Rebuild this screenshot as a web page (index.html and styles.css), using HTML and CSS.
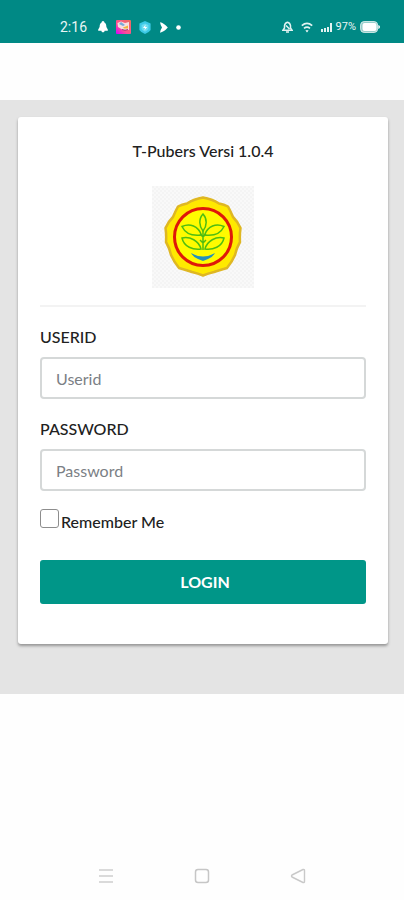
FILE: index.html
```html
<!DOCTYPE html>
<html lang="id">
<head>
    <meta charset="UTF-8">
    <meta name="viewport" content="width=device-width, initial-scale=1.0">
    <title>T-Pubers</title>
    <link rel="stylesheet" href="styles.css">
</head>
<body>
    <header class="status-bar">
        <div class="status-left">
            <span class="clock">2:16</span>
            <svg width="10" height="12" viewBox="0 0 10 12" fill="#fff">
                <path d="M5 0C6 0 6.3 1 6.4 1.6C8 2.5 8.3 4 8.4 6L9.8 8.4V9.8H.2V8.4L1.6 6C1.7 4 2 2.5 3.6 1.6C3.7 1 4 0 5 0ZM3.4 9.8H6.6C6.4 11.8 3.6 11.8 3.4 9.8Z"/>
            </svg>
            <svg width="15" height="14" viewBox="0 0 15 14">
                <defs>
                    <linearGradient id="photo" x1="0" y1="1" x2="1" y2="0">
                        <stop offset="0" stop-color="#d400ff"/>
                        <stop offset=".4" stop-color="#ff4f93"/>
                        <stop offset="1" stop-color="#e8705c"/>
                    </linearGradient>
                </defs>
                <rect width="15" height="14" rx="1" fill="url(#photo)"/>
                <path d="M1.5 3L5 1.5L9 3L13 2V10H7L2 7Z" fill="#f6dfe0"/>
                <path d="M5 2L9 5L7 6L3 4Z" fill="#77a9d8"/>
                <path d="M7 7.5L12 5.5V8.5H8Z" fill="#f2b53c"/>
                <path d="M6 9.5Q9 11 12 9.5" stroke="#a3357a" fill="none"/>
            </svg>
            <svg width="12" height="13" viewBox="0 0 12 13">
                <path d="M6 0L11.6 2.4V9Q10 11.5 6 13Q2 11.5 .4 9V2.4Z" fill="#3bc9e6"/>
                <path d="M6 2.4L9.4 4V8Q8.5 9.8 6 10.8Q3.5 9.8 2.6 8V4Z" fill="#6bdcf0"/>
                <path d="M6.6 3.6L4 7H6L5.4 9.4L8.2 6H6.2Z" fill="#fff"/>
            </svg>
            <svg width="9" height="11" viewBox="0 0 9 11" fill="#fff">
                <path d="M1 .3Q5 1 8.8 5.5Q5 10 1 10.7Q1.5 7.5 3 5.5Q1.5 3.5 1 .3Z"/>
            </svg>
            <svg width="5" height="5" viewBox="0 0 5 5" fill="#fff">
                <circle cx="2.5" cy="2.5" r="2.3"/>
            </svg>
        </div>
        <div class="status-right">
            <svg width="11" height="12" viewBox="0 0 11 12" fill="none" stroke="#e3f3f2" stroke-width="1.5">
                <path d="M1 9.2H10L8.5 7V4.6Q8 1.8 5.5 1.2Q3 1.8 2.5 4.6V7ZM4 11H7M4 4.5L7.5 8"/>
            </svg>
            <svg width="12" height="11" viewBox="0 0 12 11" fill="none" stroke="#e3f3f2" stroke-width="1.7">
                <path d="M.8 3.6Q6-.8 11.2 3.6M3 6.3Q6 3.8 9 6.3"/>
                <path d="M4.4 8.3H7.6L6 10.6Z" fill="#fff" stroke="none"/>
            </svg>
            <svg width="11" height="10" viewBox="0 0 11 10" fill="#e3f3f2">
                <path d="M0 7H2V10H0ZM3 6H5V10H3ZM6 5H8V10H6ZM9 1H11V10H9Z"/>
            </svg>
            <span class="battery-level">97%</span>
            <svg width="20" height="12" viewBox="0 0 20 12">
                <rect x=".6" y=".6" width="17" height="10.8" rx="3.5" fill="#8fcac7" stroke="#d5ecea"/>
                <rect x="2.5" y="2" width="14" height="8" rx="2" fill="#fff"/>
                <path d="M18.3 4Q20 4.5 20 6T18.3 8Z" fill="#fff"/>
            </svg>
        </div>
    </header>

    <div class="navbar"></div>

    <main class="page">
        <form class="card">
            <h1 class="title">T-Pubers Versi 1.0.4</h1>
            <svg class="logo" viewBox="0 0 102 102" role="img" aria-label="Logo">
                <defs>
                    <pattern id="checks" width="4" height="4" patternUnits="userSpaceOnUse">
                        <rect width="4" height="4" fill="#f9f9f9"/>
                        <path d="M0 0H2V2H0ZM2 2H4V4H2Z" fill="#f4f4f4"/>
                    </pattern>
                </defs>
                <rect width="102" height="102" fill="url(#checks)"/>
                <path d="M51 11.5Q60 13 67 17.5Q72 18.500 76 20.5Q79 26 81 31Q86 36 88.5 42Q87.500 49 88 56Q84.500 62 83 69Q80 76 75 82Q68 84 62 86Q56 87.500 51 89.5Q46 87.500 40 86Q34 84 27 82Q22 76 19 69Q17.500 62 14 56Q14.500 49 13.5 42Q16 36 21 31Q23 26 26 20.5Q30 18.500 35 17.5Q42 13 51 11.5Z" fill="#ffe900" stroke="#dfb722" stroke-width="2.5" stroke-linejoin="round"/>
                <circle cx="51" cy="51" r="28.5" fill="#fffb00" stroke="#df1809" stroke-width="3"/>
                <g fill="none" stroke="#4fbd12" stroke-width="1.5">
                    <path d="M51 45C47 40 46.5 33 51 28C55.5 33 55 40 51 45Z"/>
                    <path d="M49.5 49C46 40 38 37 30 40.5C34 49 42 50 49.5 49Z"/>
                    <path d="M52.5 49C56 40 64 37 72 40.5C68 49 60 50 52.5 49Z"/>
                    <path d="M49 63C47 55 38 50 30 52C32 61 41 64 49 63Z"/>
                    <path d="M53 63C55 55 64 50 72 52C70 61 61 64 53 63Z"/>
                    <path d="M51 45V64M48 54L51 57L54 54M48 48L51 51L54 48"/>
                </g>
                <path d="M39 67Q45 70.5 51 70.5Q57 70.5 63 67Q61 71 56 73L51 75L46 73Q41 71 39 67Z" fill="#2391bd"/>
            </svg>
            <hr class="divider">

            <label class="field-label" for="userid">USERID</label>
            <input class="field" type="text" id="userid" placeholder="Userid">

            <label class="field-label" for="password">PASSWORD</label>
            <input class="field" type="password" id="password" placeholder="Password">

            <div class="remember">
                <input class="checkbox" type="checkbox" id="remember">
                <label for="remember">Remember Me</label>
            </div>

            <button class="login" type="submit">LOGIN</button>
        </form>
    </main>

    <nav class="system-nav">
        <button class="nav-btn" type="button" aria-label="Menu">
            <svg width="16" height="16" viewBox="0 0 16 16" stroke="#dadada" stroke-width="2">
                <path d="M1 2H15M1 8H15M1 14H15"/>
            </svg>
        </button>
        <button class="nav-btn" type="button" aria-label="Home">
            <svg width="16" height="16" viewBox="0 0 16 16" fill="none" stroke="#c6c6c6" stroke-width="1.5">
                <rect x="1.5" y="1.5" width="13" height="13" rx="2.5"/>
            </svg>
        </button>
        <button class="nav-btn" type="button" aria-label="Back">
            <svg width="16" height="16" viewBox="0 0 16 16" fill="none" stroke="#c9c9c9" stroke-width="1.4" stroke-linejoin="round">
                <path d="M1.5 8Q1.5 7.5 2 7L13 1.5Q14.5 1.2 14.5 2.5V13.5Q14.5 14.8 13 14.5L2 9Q1.5 8.5 1.5 8Z"/>
            </svg>
        </button>
    </nav>
</body>
</html>
```

FILE: styles.css
```css
* {
    box-sizing: border-box;
}

body {
    display: flex;
    flex-direction: column;
    min-height: 100vh;
    margin: 0;
    background: #fefefe;
    color: #212121;
    font-family: Lato, sans-serif;
    font-size: 16px;
    line-height: 24px;
}

svg {
    display: block;
    flex-shrink: 0;
}

.status-bar {
    display: flex;
    justify-content: space-between;
    padding: 15px 24px 4px 60px;
    background: #008985;
    color: #e9f6f5;
}

.status-left,
.status-right {
    display: flex;
    align-items: center;
    gap: 8px;
}

.clock {
    font-family: Roboto, sans-serif;
    font-size: 14px;
    margin-right: 3px;
}

.battery-level {
    font-family: Roboto, sans-serif;
    font-size: 11px;
    margin: 0 -4px;
}

.navbar {
    height: 57px;
}

.page {
    padding: 17px 16px 50px 18px;
    background: #e4e4e4;
}

.card {
    display: flex;
    flex-direction: column;
    padding: 22px 22px 40px;
    border-radius: 3px;
    background: #fff;
    box-shadow: 0 2px 3px rgba(0, 0, 0, 0.35);
}

.title {
    margin: 0 0 23px;
    font-size: 16px;
    font-weight: 500;
    text-align: center;
}

.logo {
    width: 102px;
    height: 102px;
    align-self: center;
}

.divider {
    width: 100%;
    margin: 17px 0 18px;
    border: 0;
    border-top: 2px solid #f3f3f3;
}

.field-label {
    margin-bottom: 8px;
    font-weight: 500;
}

.field {
    width: 100%;
    height: 42px;
    margin-bottom: 18px;
    padding: 0 14px;
    border: 2px solid #d5d8d8;
    border-radius: 4px;
    background: #fff;
    color: #495057;
    font: inherit;
}

.field::placeholder {
    color: #7b8085;
    opacity: 1;
}

.remember {
    display: flex;
    align-items: center;
    gap: 2px;
    font-weight: 500;
}

.checkbox {
    appearance: none;
    width: 19px;
    height: 19px;
    margin: 0 0 6px;
    border: 1px solid #8d8d8d;
    border-radius: 3px;
    background: #fff;
}

.checkbox:checked {
    background: #009688;
}

.login {
    height: 44px;
    margin-top: 26px;
    padding: 0 0 0 4px;
    border: 0;
    border-radius: 3px;
    background: #009688;
    color: #fff;
    font: inherit;
    font-weight: 700;
    cursor: pointer;
}

.system-nav {
    display: flex;
    justify-content: center;
    gap: 80px;
    margin-top: auto;
    padding-bottom: 16px;
}

.nav-btn {
    padding: 0;
    border: 0;
    background: none;
}
```
